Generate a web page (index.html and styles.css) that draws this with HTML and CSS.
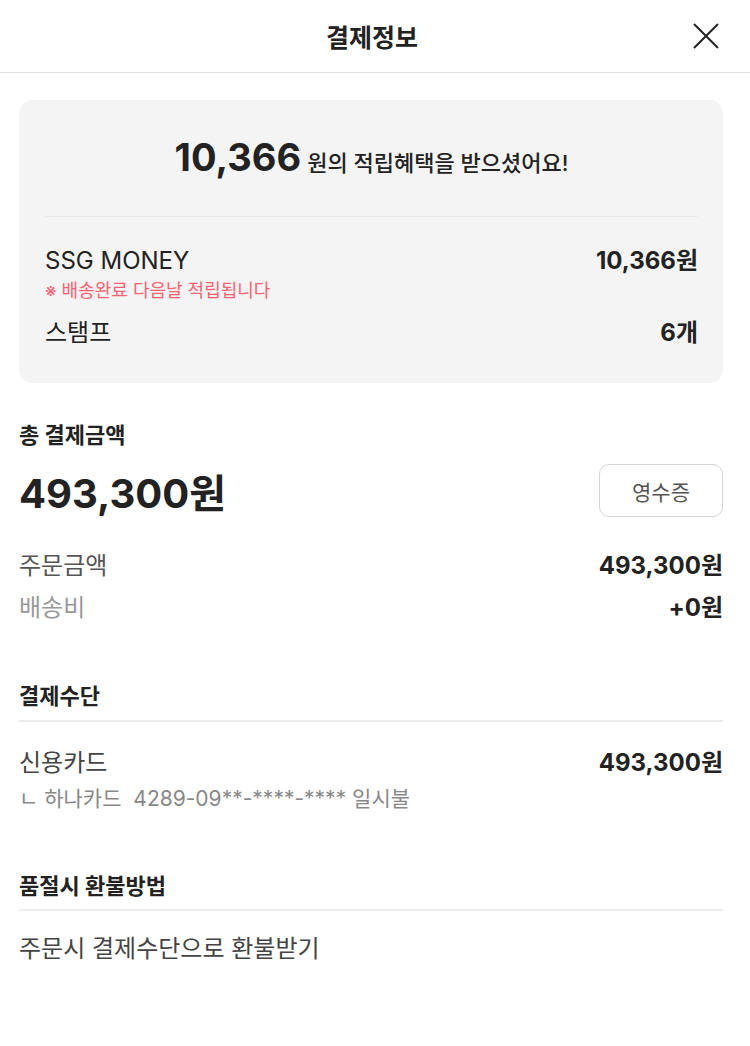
FILE: index.html
```html
<!DOCTYPE html>
<html lang="ko">
<head>
  <meta charset="UTF-8">
  <title>결제정보</title>
  <link rel="stylesheet" href="styles.css">
</head>
<body>
  <div class="header">
    <span></span>
    <div class="title">결제정보</div>
    <button class="close" aria-label="닫기">
      <svg width="28" height="28" viewBox="0 0 28 28"><path d="M2 2 L26 26 M26 2 L2 26" stroke="#222" stroke-width="2" fill="none"/></svg>
    </button>
  </div>

  <div class="content">
    <div class="reward">
      <div class="reward-head"><b>10,366</b>원의 적립혜택을 받으셨어요!</div>
      <div class="reward-body">
        <div class="row">
          <span>SSG MONEY</span>
          <span class="num">10,366원</span>
        </div>
        <div class="note">※ 배송완료 다음날 적립됩니다</div>
        <div class="row stamp">
          <span>스탬프</span>
          <span class="num">6개</span>
        </div>
      </div>
    </div>

    <h3 class="sec first">총 결제금액</h3>
    <div class="total">
      <div class="total-amount">493,300원</div>
      <button class="receipt">영수증</button>
    </div>
    <div class="row price">
      <span class="label">주문금액</span>
      <span class="num">493,300원</span>
    </div>
    <div class="row price ship">
      <span class="label">배송비</span>
      <span class="num">+0원</span>
    </div>

    <h3 class="sec line">결제수단</h3>
    <div class="row pay">
      <span>신용카드</span>
      <span class="num">493,300원</span>
    </div>
    <div class="card-info">ㄴ 하나카드&nbsp; 4289-09**-****-**** 일시불</div>

    <h3 class="sec line refund">품절시 환불방법</h3>
    <p class="refund-text">주문시 결제수단으로 환불받기</p>
  </div>
</body>
</html>
```

FILE: styles.css
```css
body {
  margin: 0;
  font-family: Inter, "Noto Sans CJK KR", sans-serif;
  color: #222;
  background: #fff;
}
.header {
  height: 72px;
  display: grid;
  grid-template-columns: 1fr auto 1fr;
  align-items: center;
  padding: 0 30px 0 24px;
  border-bottom: 1px solid #dfe3e8;
}
.header .title {
  font-size: 25px;
  font-weight: bold;
}
.close {
  justify-self: end;
  border: 0;
  background: none;
  padding: 0;
  height: 28px;
}
.content {
  padding: 27px 27px 0 19px;
}
.reward {
  background: #f4f4f4;
  border-radius: 14px;
  padding: 0 25px 35px 26px;
}
.reward-head {
  height: 50px;
  display: flex;
  justify-content: center;
  align-items: baseline;
  gap: 6px;
  font-size: 22px;
  font-weight: 500;
  padding: 32px 0 34px;
  border-bottom: 1px solid #e9e9e9;
}
.reward-head b {
  font-size: 38px;
  line-height: 50px;
}
.reward-body {
  padding-top: 29px;
}
.row {
  display: flex;
  justify-content: space-between;
  align-items: center;
  font-size: 24px;
  line-height: 30px;
}
.num { font-weight: bold; }
.note {
  margin-top: 4px;
  font-size: 18px;
  line-height: 22px;
  color: #ff5f70;
}
.stamp { margin-top: 16px; }
.sec {
  margin: 0;
  font-size: 22px;
  line-height: 26px;
}
.sec.first { margin-top: 39px; }
.sec.line {
  margin-top: 60px;
  padding-bottom: 11px;
  border-bottom: 2px solid #ececec;
}
.sec.refund { margin-top: 61px; padding-bottom: 10px; }
.total {
  margin-top: 16px;
  height: 53px;
  display: flex;
  justify-content: space-between;
  align-items: center;
}
.total-amount {
  font-size: 40px;
  font-weight: bold;
}
.receipt {
  width: 124px;
  height: 53px;
  border: 1px solid #d4d4d4;
  border-radius: 10px;
  background: #fff;
  font-family: inherit;
  font-size: 21px;
  color: #555;
}
.price { margin-top: 34px; }
.price .label { color: #555; }
.price.ship { margin-top: 12px; }
.price.ship .label { color: #999; }
.pay { margin-top: 26px; color: #444; }
.pay .num { color: #222; }
.card-info {
  margin-top: 8px;
  font-size: 21px;
  line-height: 26px;
  color: #888;
}
.refund-text {
  margin: 23px 0 0;
  font-size: 24px;
  line-height: 30px;
  color: #444;
}
```
